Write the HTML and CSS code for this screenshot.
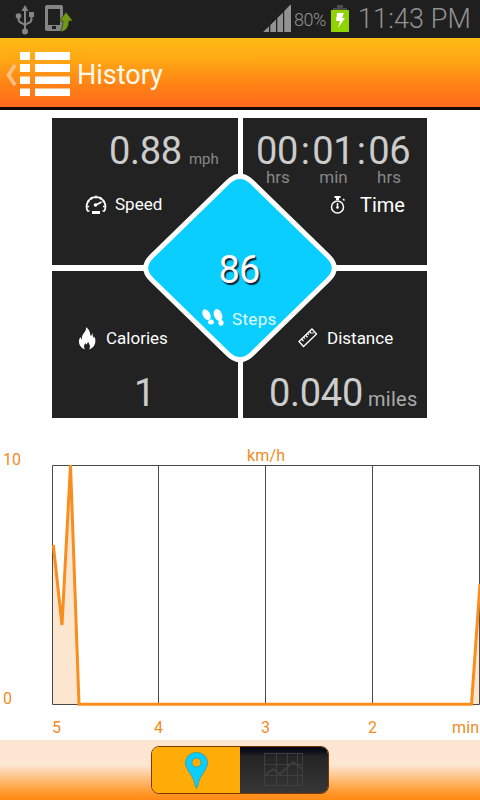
FILE: index.html
```
<!DOCTYPE html>
<html lang="en">
<head>
<meta charset="utf-8">
<title>History</title>
<link rel="stylesheet" href="styles.css">
</head>
<body>
<div class="status">
  <svg class="usb" width="20" height="32" viewBox="0 0 20 32">
    <g fill="none" stroke="#858585" stroke-width="2"><path d="M10 7V27M3.500 13v3q0 3 3 4l3.500 2M16.500 12v4q0 3-3 4L10 22"/></g>
    <g fill="#858585"><path d="M10 2l3.500 6h-7z"/><circle cx="3.500" cy="13" r="2.800"/><path d="M14 9h5v5h-5z"/><circle cx="10" cy="28.500" r="3"/></g>
  </svg>
  <svg class="phone" width="29" height="28" viewBox="0 0 29 28">
    <path fill="#858585" fill-rule="evenodd" d="M2 0h14q2 0 2 2v22q0 2-2 2H2q-2 0-2-2V2q0-2 2-2zM3 4v16h12V4zM7 21v3h4v-3z"/>
    <path d="M21 7l7 9h-4q0 10-9 11 3-4 3-11h-4z" fill="#709a13" stroke="#1f1f1f" stroke-width=".6"/>
  </svg>
  <svg class="signal" width="28" height="28" viewBox="0 0 28 28"><path fill="#929292" d="M0 27l6-5.800V27zM7.300 20l5.700-5.500V27H7.300zM14.300 13l5.700-5.500V27h-5.700zM21.200 6L27 0h1v27h-6.800z"/></svg>
  <span class="pct">80%</span>
  <svg class="battery" width="18" height="27" viewBox="0 0 18 27"><path fill="#4b4b4b" d="M6 0h6v3h4v2H2V3h4z"/><path fill="#8fd400" d="M0 5h18v22H0z"/><path fill="#fff" d="M6 8h7l-2 5h3L7 23l2-7H5z"/></svg>
  <span class="clock">11:43 PM</span>
</div>
<header class="header">
  <svg class="back" width="11" height="22" viewBox="0 0 11 22"><path d="M9 1L2.500 11l6.500 10" fill="none" stroke="#ffc184" stroke-width="3.600"/></svg>
  <svg class="list" width="50" height="44" viewBox="0 0 50 44"><path fill="#fff" d="M0 0h10v8H0zM15 0h35v8H15zM0 12h10v8H0zM15 12h35v8H15zM0 24.500h10v7.500H0zM15 24.500h35v7.500H15zM0 36.500h10V44H0zM15 36.500h35V44H15z"/></svg>
  <h1 class="title">History</h1>
</header>
<main>
  <section class="board">
    <div class="tile speed">
      <div class="value"><span class="num">0.88</span><span class="mph">mph</span></div>
      <div class="label">
        <svg width="22" height="21" viewBox="0 0 22 21"><g fill="none" stroke="#fff"><path stroke-width="1.700" d="M4.500 17H2.700A9.400 9.400 0 1 1 19.300 17H17.500"/><path stroke-width="1.300" d="M11 1.500v3M6 3l1 2.500M16 3l-1 2.500M2 7l2.500 1M20 7l-2.500 1M1.500 12.500H4M18 12.500h2.500"/><path stroke-width="1.800" d="M10 11.500l6.500-3.500"/></g><circle cx="10.500" cy="11" r="1.800" fill="#fff"/><path fill="#fff" d="M7 17h8v3H7z"/></svg>
        <span>Speed</span>
      </div>
    </div>
    <div class="tile time">
      <div class="value"><span class="num">00</span><span class="num colon">:</span><span class="num">01</span><span class="num colon">:</span><span class="num">06</span></div>
      <div class="units"><span>hrs</span><span>min</span><span>hrs</span></div>
      <div class="label">
        <svg width="16" height="20" viewBox="0 0 16 20"><g fill="none" stroke="#fff" stroke-width="1.500"><circle cx="7.500" cy="12" r="6"/><path d="M7.500 8v4M13 4l1.500 1.500"/></g><circle cx="7.500" cy="12.500" r="1.300" fill="#fff"/><path fill="#fff" d="M4.500 1h6v2H9v2H6V3H4.500z"/></svg>
        <span>Time</span>
      </div>
    </div>
    <div class="tile calories">
      <div class="label">
        <svg width="18" height="23" viewBox="0 0 18 23"><path fill="#fff" d="M8 0c5 4 3.500 7 5 9 1-1 1-2 1-3.500C15 8 14.500 9 16 11c.8-.5.700-1 .700-2 1.500 6 .8 11-5.700 13.500 2-3 .5-5-1-8-.5 2-1 2.500-1.500 3-.8-.5-.8-1-.8-1.500-2 2-2.200 4-.7 6.500C0 20 0 13 2.500 10c.5 1 .5 2 1.500 2.500C3 7 9 5 8 0z"/></svg>
        <span>Calories</span>
      </div>
      <div class="value"><span class="num">1</span></div>
    </div>
    <div class="tile distance">
      <div class="label">
        <svg width="20" height="20" viewBox="0 0 20 20"><g fill="none" stroke="#fff" stroke-width="1.300"><path d="M1 13.500L14 1l4.500 5L5.500 18.500z"/><path d="M3.500 11l2 2M5.500 9.200l1.400 1.400M7.500 7.300l2 2M9.500 5.400l1.400 1.400M11.500 3.500l2 2"/></g><circle cx="15" cy="5" r=".8" fill="#fff"/></svg>
        <span>Distance</span>
      </div>
      <div class="value"><span class="num">0.040</span><span class="miles">miles</span></div>
    </div>
    <div class="diamond">
      <svg class="shape" width="194" height="188" viewBox="0 0 194 188"><path d="M85 8Q97-3.500 109 8L185.500 82.500Q197 94 185.500 105.500L109 180Q97 191.500 85 180L8.500 105.500Q-3 94 8.500 82.500z" fill="#09ceff" stroke="#fff" stroke-width="5"/></svg>
      <div class="steps-num">86</div>
      <div class="steps-label">
        <svg width="23" height="18" viewBox="0 0 23 18"><g fill="#fff"><ellipse cx="4.500" cy="5.700" rx="3.600" ry="5.800" transform="rotate(-28 4.500 5.700)"/><ellipse cx="9" cy="13" rx="2.900" ry="2.500"/><ellipse cx="16" cy="6" rx="4" ry="6.200" transform="rotate(-20 16 6)"/><ellipse cx="19" cy="13.800" rx="2.600" ry="2.900"/></g></svg>
        <span>Steps</span>
      </div>
    </div>
  </section>
  <svg class="chart" width="480" height="300" viewBox="0 440 480 300">
    <path class="area" d="M53 545L62 625 70.500 465 79 704.500H53zM471.500 704.500L480 584V704.500z"/>
    <path class="grid" d="M52.500 465.500H479.500V704.500H52.500zM158.500 465.500V704M265.500 465.500V704M372.500 465.500V704"/>
    <path class="line" d="M53.300 545L62 625 70.500 465 79 704.300H471.500L480 584"/>
    <g class="axis">
      <text x="3" y="465" textLength="18">10</text>
      <text x="3" y="704">0</text>
      <text x="247" y="461" textLength="38">km/h</text>
      <text x="52" y="733">5</text>
      <text x="154" y="733">4</text>
      <text x="261" y="733">3</text>
      <text x="368" y="733">2</text>
      <text x="452" y="733" textLength="27">min</text>
    </g>
  </svg>
</main>
<footer class="footer">
  <div class="toggle">
    <div class="tab on"><svg width="23" height="37" viewBox="0 0 23 37"><path fill="#09ceff" stroke="#47968c" stroke-width=".8" fill-rule="evenodd" d="M11.500.5C5 .5.500 5 .500 11c0 7 8 12 9.500 22l1.500 3.500L13 33c1.500-10 9.500-15 9.500-22C22.500 5 18 .5 11.500.5zM11.500 6a4.500 4.500 0 1 1 0 9 4.500 4.500 0 0 1 0-9z"/></svg></div>
    <div class="tab off"><svg width="40" height="34" viewBox="0 0 40 34"><g fill="none" stroke="#3f3f3f"><path d="M.5.500h38v32H.500zM12.500 0v33M23.500 0v33M33.500 0v33M0 11.500h39M0 22.500h39"/><path stroke-width="1.800" d="M1 22l8-6 7 5L29 9l9 7"/></g></svg></div>
  </div>
</footer>
</body>
</html>
```
FILE: styles.css
```
* { box-sizing: border-box; }
body {
  margin: 0;
  width: 480px;
  height: 800px;
  overflow: hidden;
  background: #fff;
  font-family: Roboto, sans-serif;
  display: flex;
  flex-direction: column;
}
svg { display: block; flex: none; }
.status {
  height: 38px;
  flex: none;
  background: #1f1f1f;
  color: #929292;
  display: flex;
  align-items: flex-start;
  padding-left: 15px;
}
.usb { margin-top: 3px; }
.phone { margin: 5px 0 0 10px; }
.signal { margin: 5px 0 0 189px; }
.pct { width: 37px; margin-left: 3px; font-size: 18px; line-height: 40px; letter-spacing: -.5px; font-weight: 300; }
.battery { margin-top: 5px; }
.clock { margin-left: 9px; font-size: 27px; line-height: 38px; font-weight: 300; white-space: nowrap; letter-spacing: .1px; }
.header {
  height: 72px;
  flex: none;
  border-bottom: 3px solid #160a05;
  background: linear-gradient(#ffba14, #ffa914 30%, #ff7f16 72%, #ff6b1b);
  display: flex;
  align-items: center;
  padding-left: 6px;
}
.back { margin-top: 5px; }
.list { margin: 3px 0 0 3px; }
.title { margin: 5px 0 0 7px; font-size: 27px; line-height: 32px; font-weight: 400; color: #fffbee; }
.board {
  position: relative;
  width: 375px;
  height: 300px;
  margin: 8px 0 0 52px;
  display: grid;
  grid-template-columns: 186px 184px;
  grid-template-rows: 147px 147px;
  gap: 6px 5px;
}
.tile { background: #222; color: #fff; font-size: 17px; }
.value, .label { display: flex; align-items: baseline; white-space: nowrap; }
.label { align-items: center; height: 24px; }
.num { font-size: 38px; line-height: 36px; color: #ccc; font-weight: 400; letter-spacing: -.3px; }
.speed .value { padding: 15px 0 0 57px; }
.mph { margin-left: 7px; font-size: 15px; color: #888; }
.speed .label { margin-top: 23px; padding-left: 33px; gap: 8px; }
.time .value { padding: 15px 0 0 13px; }
.colon { width: 14px; text-align: center; }
.units { display: flex; justify-content: space-between; padding: 0 26px 0 23px; height: 23px; font-size: 17px; line-height: 17px; color: #888; }
.time .label { padding: 2px 0 0 87px; gap: 14px; font-size: 20px; }
.calories .label { margin-top: 55px; padding-left: 26px; gap: 10px; }
.calories .value { padding: 25px 0 0 82px; }
.distance .label { margin-top: 55px; padding-left: 55px; gap: 9px; }
.distance .value { padding: 25px 0 0 26px; }
.miles { margin-left: 5px; font-size: 20px; color: #aaa; letter-spacing: .3px; }
.diamond { position: absolute; left: 91px; top: 56px; width: 194px; height: 188px; color: #fff; }
.shape { position: absolute; inset: 0; }
.steps-num {
  position: relative;
  padding: 74px 2px 0 0;
  text-align: center;
  font-size: 38px;
  line-height: 44px;
  text-shadow: 1.500px 2px 1px #123;
  letter-spacing: -.8px;
}
.steps-label { position: relative; display: flex; align-items: center; padding-left: 59px; margin-top: 15px; gap: 7px; font-size: 17px; line-height: 24px; letter-spacing: .35px; color: #e2faff; }
.steps-label svg { margin-top: -2px; }
.chart { margin-top: 22px; }
.area { fill: #fde6d0; }
.grid { fill: none; stroke: #4a4a4a; stroke-width: 1; }
.line { fill: none; stroke: #f98d1e; stroke-width: 3; }
.axis { fill: #f28b22; font-size: 16px; }
.footer {
  height: 60px;
  flex: none;
  background: linear-gradient(#fde6d0, #fde6d2 42%, #ffb260 72%, #ff9120 92%, #ff8b14);
  display: flex;
  justify-content: center;
  align-items: flex-start;
  padding-top: 6px;
}
.toggle { width: 178px; height: 48px; border-radius: 8px; overflow: hidden; display: flex; border: 1px solid #7d3700; }
.tab { flex: 1; display: flex; justify-content: center; padding-top: 5px; }
.on { background: #ffac08; }
.off { background: linear-gradient(#030517, #0b0c16 8%, #242424 20%, #373737); padding-top: 6px; }
```
